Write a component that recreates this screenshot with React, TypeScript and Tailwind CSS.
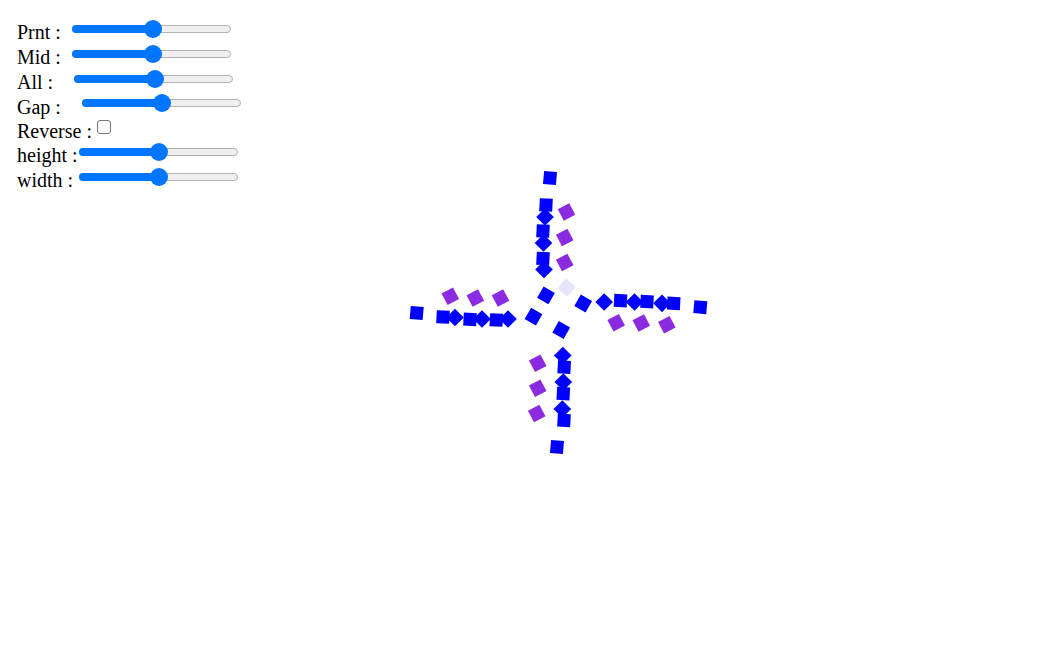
import React from 'react';

type Shape = { x: number; y: number; r: number; c: string; s?: number };

const BLUE = '#0000ff';
const PURPLE = '#8a2be2';
const LAV = '#e6e6fa';

// squares on the canvas, page coordinates
const shapes: Shape[] = [
  // top arm
  { x: 550, y: 178, r: 5, c: BLUE },
  { x: 545, y: 217, r: 45, c: BLUE, s: 12.5 },
  { x: 546, y: 205, r: 3, c: BLUE },
  { x: 543.5, y: 243, r: 45, c: BLUE, s: 12.5 },
  { x: 543, y: 231, r: 3, c: BLUE },
  { x: 544, y: 269.5, r: 45, c: BLUE, s: 12.5 },
  { x: 543, y: 258.5, r: 3, c: BLUE },
  { x: 566.5, y: 212, r: -28, c: PURPLE },
  { x: 564.7, y: 237.5, r: -28, c: PURPLE },
  { x: 564.7, y: 262.5, r: -28, c: PURPLE },
  // centre
  { x: 566.5, y: 287.5, r: 40, c: LAV },
  { x: 546, y: 295.3, r: 30, c: BLUE },
  { x: 583.2, y: 303.5, r: 30, c: BLUE },
  { x: 533.5, y: 316.7, r: 30, c: BLUE },
  { x: 561.2, y: 330, r: 30, c: BLUE },
  // left arm
  { x: 416.7, y: 313, r: 5, c: BLUE },
  { x: 455, y: 317.5, r: 45, c: BLUE, s: 12.5 },
  { x: 443, y: 317, r: 3, c: BLUE },
  { x: 482, y: 319, r: 45, c: BLUE, s: 12.5 },
  { x: 470, y: 319.3, r: 3, c: BLUE },
  { x: 508, y: 319, r: 45, c: BLUE, s: 12.5 },
  { x: 496.3, y: 320, r: 3, c: BLUE },
  { x: 450.3, y: 296.3, r: -28, c: PURPLE },
  { x: 475.3, y: 298, r: -28, c: PURPLE },
  { x: 500.5, y: 298, r: -28, c: PURPLE },
  // right arm
  { x: 604.2, y: 302, r: 45, c: BLUE, s: 12.5 },
  { x: 620.5, y: 300.7, r: 3, c: BLUE },
  { x: 634.5, y: 302, r: 45, c: BLUE, s: 12.5 },
  { x: 647, y: 301.7, r: 3, c: BLUE },
  { x: 662, y: 303.3, r: 45, c: BLUE, s: 12.5 },
  { x: 673.7, y: 303.3, r: 3, c: BLUE },
  { x: 700.3, y: 307.2, r: 5, c: BLUE },
  { x: 616.2, y: 322.8, r: -28, c: PURPLE },
  { x: 641.3, y: 323, r: -28, c: PURPLE },
  { x: 666.8, y: 324.7, r: -28, c: PURPLE },
  // bottom arm
  { x: 537.7, y: 363.2, r: -28, c: PURPLE },
  { x: 537.7, y: 388.3, r: -28, c: PURPLE },
  { x: 536.7, y: 413.5, r: -28, c: PURPLE },
  { x: 562.8, y: 355.5, r: 45, c: BLUE, s: 12.5 },
  { x: 564.2, y: 367.2, r: 3, c: BLUE },
  { x: 563.3, y: 382, r: 45, c: BLUE, s: 12.5 },
  { x: 563.3, y: 393.7, r: 3, c: BLUE },
  { x: 562.3, y: 409, r: 45, c: BLUE, s: 12.5 },
  { x: 564, y: 420.3, r: 3, c: BLUE },
  { x: 557, y: 447, r: 5, c: BLUE },
];

function Slider({ thumbShift = 1 }: { thumbShift?: number }) {
  return (
    <div className="relative mb-[8px] h-[8px] w-[159px] shrink-0 rounded-full border border-[#b2b2b2] bg-[#efefef]">
      <div className="absolute left-[-1px] top-[-1px] h-[8px] w-[81px] rounded-l-full bg-[#0075ff]" />
      <div
        className="absolute top-1/2 h-[18px] w-[18px] -translate-y-1/2 rounded-full bg-[#0075ff]"
        style={{ left: 79.5 + thumbShift - 9 - 1 }}
      />
    </div>
  );
}

function Row({ label, labelW, h = 'h-[25px]', children }: { label: string; labelW: string; h?: string; children: React.ReactNode }) {
  return (
    <div className={`flex items-center ${h}`}>
      <span className={`${labelW} shrink-0 whitespace-nowrap leading-[23px]`}>{label}</span>
      {children}
    </div>
  );
}

export default function App() {
  return (
    <div
      className="flex min-h-[652px] w-full bg-white text-black"
      style={{ fontFamily: '"Liberation Serif", "Times New Roman", serif' }}
    >
      <div className="w-[260px] shrink-0 pl-[17px] pt-5 text-[20px]">
        <Row label="Prnt :" labelW="w-[55px]">
          <Slider />
        </Row>
        <Row label="Mid :" labelW="w-[55px]">
          <Slider />
        </Row>
        <Row label="All :" labelW="w-[57px]">
          <Slider />
        </Row>
        <Row label="Gap :" labelW="w-[65px]" h="h-[24px]">
          <Slider thumbShift={0.5} />
        </Row>
        <Row label="Reverse :" labelW="w-[80px]" h="h-[24px]">
          <div className="mb-[8px] h-[14px] w-[14px] rounded-[3px] border border-[#767676] bg-white" />
        </Row>
        <Row label="height :" labelW="w-[62px]">
          <Slider thumbShift={0} />
        </Row>
        <Row label="width :" labelW="w-[62px]">
          <Slider thumbShift={0} />
        </Row>
      </div>
      <svg width={803} height={652} viewBox="260 0 803 652" className="block shrink-0">
        {shapes.map((q, i) => {
          const s = q.s ?? 13;
          return (
            <rect
              key={i}
              x={-s / 2}
              y={-s / 2}
              width={s}
              height={s}
              fill={q.c}
              transform={`translate(${q.x} ${q.y}) rotate(${q.r})`}
            />
          );
        })}
      </svg>
    </div>
  );
}
